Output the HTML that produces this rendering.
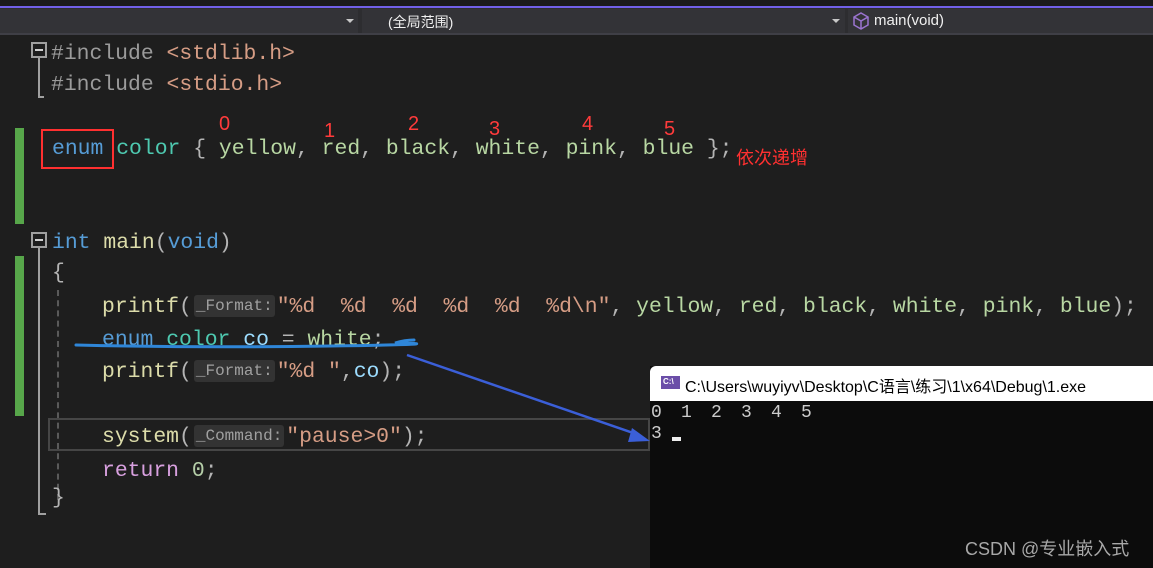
<!DOCTYPE html>
<html><head><meta charset="utf-8"><style>
body{margin:0;width:1153px;height:568px;background:#1e1e1e;overflow:hidden;position:relative;font-family:"Liberation Mono",monospace}
.a{position:absolute}
.l{position:absolute;white-space:pre;font-size:21.4px;line-height:26px;font-family:"Liberation Mono",monospace}
.pp{color:#9b9b9b}.hd{color:#d69d85}.kw{color:#569cd6}.ty{color:#4ec9b0}.en{color:#b8d7a3}.br{color:#b4b4b4}
.fn{color:#dcdcaa}.st{color:#d69d85}.va{color:#9cdcfe}.rt{color:#d8a0df}.nu{color:#b5cea8}
.hint{display:inline-block;background:#333333;color:#a0a0a0;font-size:16px;line-height:22px;border-radius:3px;padding:0 2px;vertical-align:middle;margin:0 2px}
.rn{position:absolute;color:#ff3b3b;font-family:"Liberation Sans",sans-serif;font-size:20px}
.box{position:absolute;width:12px;height:12px;border:2px solid #a0a0a0}
.box:after{content:"";position:absolute;left:2px;top:5px;width:8px;height:2px;background:#d0d0d0}
</style></head><body>
<div class="a" style="left:0;top:0;width:1153px;height:6px;background:#1b1b1c"></div>
<div class="a" style="left:0;top:6px;width:1153px;height:2px;background:#7160e8"></div>
<div class="a" style="left:0;top:8px;width:1153px;height:25px;background:#2d2d30"></div>
<div class="a" style="left:0;top:9px;width:358px;height:24px;background:#333337"></div>
<div class="a" style="left:362px;top:9px;width:483px;height:24px;background:#333337"></div>
<div class="a" style="left:848px;top:9px;width:305px;height:24px;background:#333337"></div>
<div class="a" style="left:0;top:33px;width:1153px;height:2px;background:#3f3f46"></div>
<div class="a" style="left:346px;top:19px;border:4px solid transparent;border-top:4px solid #c8c8c8"></div>
<div class="a" style="left:832px;top:19px;border:4px solid transparent;border-top:4px solid #c8c8c8"></div>
<div class="a" style="left:388px;top:12px;color:#f0f0f0;font:14px 'Liberation Sans','Noto Sans CJK SC',sans-serif">(全局范围)</div>
<svg class="a" style="left:853px;top:12px" width="16" height="18" viewBox="0 0 16 18"><path d="M8 1L15 5V13L8 17L1 13V5Z M1 5L8 9L15 5 M8 9V17" fill="none" stroke="#9b74d0" stroke-width="1.5"/></svg>
<div class="a" style="left:874px;top:12px;color:#f0f0f0;font:15px 'Liberation Sans',sans-serif">main(void)</div>

<div class="a" style="left:15px;top:128px;width:9px;height:96px;background:#57a64a"></div>
<div class="a" style="left:15px;top:256px;width:9px;height:160px;background:#57a64a"></div>
<div class="box" style="left:31px;top:42px"></div>
<div class="a" style="left:38px;top:58px;width:2px;height:39px;background:#a0a0a0"></div>
<div class="a" style="left:38px;top:96px;width:6px;height:2px;background:#a0a0a0"></div>
<div class="box" style="left:31px;top:232px"></div>
<div class="a" style="left:38px;top:248px;width:2px;height:266px;background:#a0a0a0"></div>
<div class="a" style="left:38px;top:513px;width:8px;height:2px;background:#a0a0a0"></div>
<div class="a" style="left:57px;top:290px;width:0;height:210px;border-left:2px dashed #5a5a5a"></div>

<div class="a" style="left:48px;top:418px;width:602px;height:33px;border:2px solid #464646;box-sizing:border-box"></div>

<div class="l" style="left:51px;top:41px"><span class="pp">#include </span><span class="hd">&lt;stdlib.h&gt;</span></div>
<div class="l" style="left:51px;top:72px"><span class="pp">#include </span><span class="hd">&lt;stdio.h&gt;</span></div>
<div class="l" style="left:52px;top:136px"><span class="kw">enum</span> <span class="ty">color</span> <span class="br">{</span> <span class="en">yellow</span><span class="br">,</span> <span class="en">red</span><span class="br">,</span> <span class="en">black</span><span class="br">,</span> <span class="en">white</span><span class="br">,</span> <span class="en">pink</span><span class="br">,</span> <span class="en">blue</span> <span class="br">};</span></div>
<div class="a" style="left:41px;top:129px;width:73px;height:40px;border:2px solid #ff3030;box-sizing:border-box"></div>
<div class="rn" style="left:219px;top:113px">0</div>
<div class="rn" style="left:324px;top:120px">1</div>
<div class="rn" style="left:408px;top:113px">2</div>
<div class="rn" style="left:489px;top:118px">3</div>
<div class="rn" style="left:582px;top:113px">4</div>
<div class="rn" style="left:664px;top:118px">5</div>
<div class="a" style="left:736px;top:144px;color:#ff3030;font:18px 'Noto Sans CJK SC',sans-serif">依次递增</div>

<div class="l" style="left:52px;top:230px"><span class="kw">int</span> <span class="fn">main</span><span class="br">(</span><span class="kw">void</span><span class="br">)</span></div>
<div class="l" style="left:52px;top:260px"><span class="br">{</span></div>
<div class="l" style="left:102px;top:294px"><span class="fn">printf</span><span class="br">(</span><span class="hint">_Format:</span><span class="st">"%d  %d  %d  %d  %d  %d\n"</span><span class="br">,</span> <span class="en">yellow</span><span class="br">,</span> <span class="en">red</span><span class="br">,</span> <span class="en">black</span><span class="br">,</span> <span class="en">white</span><span class="br">,</span> <span class="en">pink</span><span class="br">,</span> <span class="en">blue</span><span class="br">);</span></div>
<div class="l" style="left:102px;top:327px"><span class="kw">enum</span> <span class="ty">color</span> <span class="va">co</span> <span class="br">=</span> <span class="en">white</span><span class="br">;</span></div>
<div class="l" style="left:102px;top:359px"><span class="fn">printf</span><span class="br">(</span><span class="hint">_Format:</span><span class="st">"%d "</span><span class="br">,</span><span class="va">co</span><span class="br">);</span></div>
<div class="l" style="left:102px;top:424px"><span class="fn">system</span><span class="br">(</span><span class="hint">_Command:</span><span class="st">"pause&gt;0"</span><span class="br">);</span></div>
<div class="l" style="left:102px;top:458px"><span class="rt">return</span> <span class="nu">0</span><span class="br">;</span></div>
<div class="l" style="left:52px;top:485px"><span class="br">}</span></div>

<div class="a" style="left:650px;top:366px;width:503px;height:202px;background:#0c0c0c"></div>
<div class="a" style="left:650px;top:366px;width:503px;height:35px;background:#fff;border-radius:6px 0 0 0"></div>
<div class="a" style="left:661px;top:376px;width:19px;height:13px;background:#6b4ea8"></div>
<div class="a" style="left:663px;top:377px;color:#fff;font:bold 8px 'Liberation Sans',sans-serif">C:\</div>
<div class="a" style="left:685px;top:373px;color:#000;font:16px 'Liberation Sans','Noto Sans CJK SC',sans-serif">C:\Users\wuyiyv\Desktop\C语言\练习\1\x64\Debug\1.exe</div>
<div class="a" style="left:651px;top:403px;color:#cccccc;font:18px/20px 'Liberation Mono',monospace;white-space:pre;letter-spacing:-0.8px">0  1  2  3  4  5</div>
<div class="a" style="left:651px;top:424px;color:#cccccc;font:18px/20px 'Liberation Mono',monospace">3</div>
<div class="a" style="left:672px;top:437px;width:9px;height:4px;background:#eee"></div>
<div class="a" style="left:965px;top:535px;color:#a8a8a8;font:18px 'Liberation Sans','Noto Sans CJK SC',sans-serif">CSDN @专业嵌入式</div>

<svg class="a" style="left:0;top:0" width="1153" height="568">
<path d="M76 345 Q200 348 330 346 T395 343 Q405 340 414 340" fill="none" stroke="#2f86d8" stroke-width="3" stroke-linecap="round"/>
<path d="M407 355 L636 434" stroke="#3b5fd8" stroke-width="2.5"/>
<path d="M650 441 L632 428 L628 442 Z" fill="#3b5fd8"/>
</svg>
</body></html>
